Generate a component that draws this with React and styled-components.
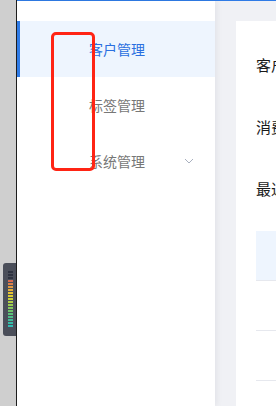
import React from 'react'
import styled, { createGlobalStyle } from 'styled-components'

const GlobalStyle = createGlobalStyle`
  html, body {
    margin: 0;
    padding: 0;
    overflow: hidden;
  }
  body {
    font-family: "Noto Sans CJK SC", "Noto Sans", sans-serif;
  }
`

const Page = styled.div`
  position: relative;
  display: flex;
  width: 276px;
  height: 406px;
  overflow: hidden;
`

const DesktopStrip = styled.div`
  flex: none;
  width: 16px;
  background: #cfcfcf;
  border-right: 1px solid #1e1e1e;
  padding-top: 263px;
  box-sizing: content-box;
`

const Meter = styled.div`
  margin-left: 3px;
  width: 13px;
  height: 73px;
  box-sizing: border-box;
  background: #4b4f5a;
  border-radius: 3px 0 0 3px;
  padding: 8px 3px 0 5px;
  display: flex;
  flex-direction: column;
  gap: 1px;
`

const MeterBar = styled.div`
  height: 2px;
  width: 5px;
  background: ${p => p.$color};
`

const Window = styled.div`
  flex: 1;
  display: flex;
  flex-direction: column;
  border-top: 1px solid #2f7be6;
  min-width: 0;
`

const Body = styled.div`
  flex: 1;
  display: flex;
  min-height: 0;
`

const Sidebar = styled.nav`
  flex: none;
  width: 198px;
  background: #fff;
  padding-top: 20px;
  box-shadow: 2px 0 6px rgba(0, 21, 41, 0.06);
  position: relative;
  z-index: 1;
`

const MenuItem = styled.div`
  height: 56px;
  display: flex;
  align-items: center;
  padding-left: ${p => (p.$active ? 69 : 72)}px;
  padding-right: 21px;
  font-size: 14px;
  color: ${p => (p.$active ? '#2a6fe0' : '#777')};
  background: ${p => (p.$active ? '#eef5fe' : 'transparent')};
  border-left: ${p => (p.$active ? '3px solid #2f7be6' : 'none')};
`

const Label = styled.span`
  flex: 1;
`

const Main = styled.main`
  flex: 1;
  background: #f0f1f5;
  padding: 20px 0 0 21px;
  min-width: 0;
`

const Card = styled.section`
  background: #fff;
  height: 100%;
  padding: 34px 0 0 20px;
  white-space: nowrap;
  overflow: hidden;
`

const Field = styled.div`
  height: 62px;
  font-size: 15px;
  line-height: 20px;
  color: #1a1a1a;
`

const TableHead = styled.div`
  margin-top: -10px;
  height: 49px;
  background: #eef5fe;
  border-bottom: 1px solid #e6e8ee;
`

const TableRow = styled.div`
  height: 49px;
  border-bottom: 1px solid #e6e8ee;
`

const Annotation = styled.div`
  position: absolute;
  z-index: 5;
  left: 51px;
  top: 32px;
  width: 44px;
  height: 139px;
  box-sizing: border-box;
  border: 3px solid #ff2414;
  border-radius: 5px;
  pointer-events: none;
`

const Chevron = () => (
  <svg width="10" height="6" viewBox="0 0 10 6" fill="none">
    <path d="M1 1l4 4 4-4" stroke="#a9b0bf" strokeWidth="1" />
  </svg>
)

const meterColors = [
  '#2e3340', '#2e3340', '#2e3340',
  '#d9694f', '#dc7f4a', '#e09a42', '#e4ae3b', '#e6c234',
  '#dccb30', '#c9cf38', '#b2cf44', '#9acd50', '#84c95c',
  '#6ec46a', '#5bc079', '#4cbd88', '#3fbb98', '#36bba8', '#30bcb4',
]

export default function App() {
  return (
    <>
      <GlobalStyle />
      <Page>
        <DesktopStrip>
          <Meter>
            {meterColors.map((c, i) => (
              <MeterBar key={i} $color={c} />
            ))}
          </Meter>
        </DesktopStrip>
        <Window>
          <Body>
            <Sidebar>
              <MenuItem $active>
                <Label>客户管理</Label>
              </MenuItem>
              <MenuItem>
                <Label>标签管理</Label>
              </MenuItem>
              <MenuItem>
                <Label>系统管理</Label>
                <Chevron />
              </MenuItem>
            </Sidebar>
            <Main>
              <Card>
                <Field>客户名称</Field>
                <Field>消费金额</Field>
                <Field>最近消费</Field>
                <TableHead />
                <TableRow />
                <TableRow />
              </Card>
            </Main>
          </Body>
        </Window>
        <Annotation />
      </Page>
    </>
  )
}
